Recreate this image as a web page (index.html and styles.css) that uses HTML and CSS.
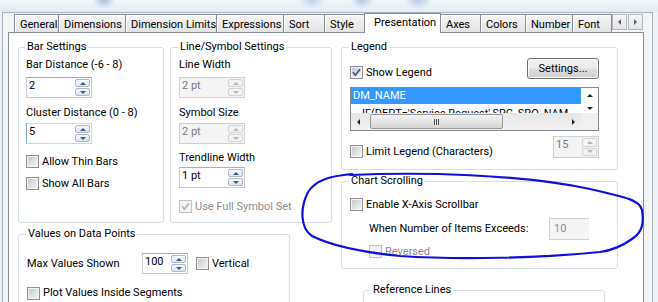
FILE: index.html
```html
<!DOCTYPE html>
<html lang="en">
<head>
    <meta charset="UTF-8">
    <meta name="viewport" content="width=device-width, initial-scale=1.0">
    <title>Chart Properties - Presentation</title>
    <link rel="stylesheet" href="styles.css">
</head>
<body>
    <div class="glass"></div>

    <div class="frame">
        <!-- Tab strip -->
        <div class="tabrow">
            <div class="tabs">
                <div class="tab">General</div>
                <div class="tab">Dimensions</div>
                <div class="tab">Dimension Limits</div>
                <div class="tab">Expressions</div>
                <div class="tab">Sort</div>
                <div class="tab">Style</div>
                <div class="tab active">Presentation</div>
                <div class="tab">Axes</div>
                <div class="tab">Colors</div>
                <div class="tab">Number</div>
                <div class="tab last">Font</div>
            </div>
            <div class="tab-scroll">
                <span class="tab-btn"><i class="tri-left"></i></span>
                <span class="tab-btn"><i class="tri-right"></i></span>
            </div>
        </div>

        <!-- Presentation page -->
        <div class="page">
            <div class="col">
                <div class="pair">
                    <fieldset class="group bar-settings">
                        <legend>Bar Settings</legend>
                        <div class="lbl">Bar Distance (-6 - 8)</div>
                        <div class="spin w66 first"><span class="val">2</span><span class="updown"><i class="up"></i><i class="down"></i></span></div>
                        <div class="lbl next">Cluster Distance (0 - 8)</div>
                        <div class="spin w66 second hot"><span class="val">5</span><span class="updown"><i class="up"></i><i class="down"></i></span></div>
                        <label class="check c1"><span class="cb"></span>Allow Thin Bars</label>
                        <label class="check c2"><span class="cb"></span>Show All Bars</label>
                    </fieldset>

                    <fieldset class="group line-settings">
                        <legend>Line/Symbol Settings</legend>
                        <div class="lbl">Line Width</div>
                        <div class="spin w66 first off"><span class="val">2 pt</span><span class="updown"><i class="up"></i><i class="down"></i></span></div>
                        <div class="lbl next">Symbol Size</div>
                        <div class="spin w66 second off"><span class="val">2 pt</span><span class="updown"><i class="up"></i><i class="down"></i></span></div>
                        <div class="lbl third">Trendline Width</div>
                        <div class="spin w66 fourth"><span class="val">1 pt</span><span class="updown"><i class="up"></i><i class="down"></i></span></div>
                        <label class="check c3 dis"><span class="cb"><svg class="tick" width="9" height="9" viewBox="0 0 9 9"><path d="M1 4.2 L3.4 7.2 L8 1.2" fill="none" stroke="#b4b4b4" stroke-width="1.7"/></svg></span>Use Full Symbol Set</label>
                    </fieldset>
                </div>

                <fieldset class="group values">
                    <legend>Values on Data Points</legend>
                    <div class="max-row">
                        <span class="max-lbl">Max Values Shown</span>
                        <div class="spin w46"><span class="val">100</span><span class="updown"><i class="up"></i><i class="down"></i></span></div>
                        <label class="check vert"><span class="cb"></span>Vertical</label>
                    </div>
                    <label class="check plot"><span class="cb"></span>Plot Values Inside Segments</label>
                </fieldset>
            </div>

            <div class="col">
                <fieldset class="group legend-box">
                    <legend>Legend</legend>
                    <div class="legend-top">
                        <label class="check show"><span class="cb"><svg class="tick" width="9" height="9" viewBox="0 0 9 9"><path d="M1 4.2 L3.4 7.2 L8 1.2" fill="none" stroke="#3c5088" stroke-width="1.7"/></svg></span>Show Legend</label>
                        <button class="btn">Settings...</button>
                    </div>
                    <div class="listbox">
                        <div class="list-rows">
                            <div class="row sel">DM_NAME</div>
                            <div class="row indent">IF(DEPT='Service Request',SRC_SRQ_NAM</div>
                        </div>
                        <div class="vscroll"><i class="tri-up"></i><i class="tri-down"></i></div>
                        <div class="hscroll">
                            <i class="tri-left dark"></i>
                            <span class="thumb"><span class="grip"></span></span>
                            <i class="tri-right dark"></i>
                        </div>
                        <div class="corner"></div>
                    </div>
                    <div class="limit-row">
                        <label class="check limit"><span class="cb"></span>Limit Legend (Characters)</label>
                        <div class="spin w46 tall off"><span class="val">15</span><span class="updown"><i class="up"></i><i class="down"></i></span></div>
                    </div>
                </fieldset>

                <fieldset class="group chart-scroll">
                    <legend>Chart Scrolling</legend>
                    <label class="check"><span class="cb"></span>Enable X-Axis Scrollbar</label>
                    <div class="exceed-row">
                        <span class="exceed-lbl">When Number of Items Exceeds:</span>
                        <span class="textbox off">10</span>
                    </div>
                    <label class="check rev dis"><span class="cb"></span>Reversed</label>
                </fieldset>

                <fieldset class="group ref-lines">
                    <legend>Reference Lines</legend>
                    <div class="ref-list"></div>
                </fieldset>
            </div>
        </div>
    </div>

    <!-- hand drawn marker around chart scrolling -->
    <svg class="scribble" width="658" height="302" viewBox="0 0 658 302">
        <path d="M350 175 C420 172 520 174 590 189 C625 197 640 200 642 210 C644 222 643 232 632 239 C625 244 615 250 600 252 C540 258 460 260 400 256 C360 252 330 245 312 236 C300 228 300 208 308 192 C316 180 330 176 352 174"
              fill="none" stroke="#1010dc" stroke-width="2.2" stroke-linecap="round"/>
    </svg>
</body>
</html>
```

FILE: styles.css
```css
* {
    box-sizing: border-box;
}
body {
    margin: 0;
    width: 658px;
    height: 302px;
    overflow: hidden;
    position: relative;
    background: #eef2f6;
    font-family: Roboto, "Liberation Sans", Arial, sans-serif;
    font-size: 11px;
    line-height: 14px;
    color: #000;
}
.glass {
    height: 12px;
    background:
        radial-gradient(ellipse 12px 9px at 104px 0, #a9c2dc, transparent),
        radial-gradient(ellipse 14px 9px at 312px 0, #bcd0e4, transparent),
        radial-gradient(ellipse 12px 9px at 362px 0, #b2c9e0, transparent),
        radial-gradient(ellipse 14px 9px at 418px 0, #b2c9e0, transparent),
        linear-gradient(#f3f7fb, #e2eaf3);
}
.frame {
    width: 651px;
    height: 290px;
    overflow: hidden;
    margin-left: 2px;
    border: 1px solid #a9b3be;
    border-bottom: 0;
    padding: 0 8px 0 5px;
    background: #f4f4f4;
}

/* tabs */
.tabrow {
    display: flex;
    align-items: flex-end;
    height: 19px;
    margin: 0 1px 0 6px;
}
.tabs {
    display: grid;
    grid-template-columns: 44px 67px 91px 67px 41px 41px 75px 40px 45px 47px 40px;
    align-items: end;
}
.tab {
    height: 18px;
    padding: 3px 0 0 5px;
    border: 1px solid #898c95;
    border-bottom: 0;
    border-right: 0;
    background: linear-gradient(#f6f6f6, #ececec 50%, #e3e3e3);
    box-shadow: inset 1px 1px 0 #fdfdfd;
    white-space: nowrap;
    overflow: hidden;
}
.tab.last {
    border-right: 1px solid #898c95;
}
.tab.active {
    position: relative;
    z-index: 1;
    height: 20px;
    margin: 0 -1px -1px;
    padding: 2px 0 0 9px;
    border-right: 1px solid #898c95;
    background: #fff;
    box-shadow: none;
}
.tab-scroll {
    align-self: flex-start;
    display: flex;
    gap: 1px;
    margin: 1px 0 0 auto;
}
.tab-btn {
    width: 15px;
    height: 16px;
    border: 1px solid #b4b8bf;
    background: linear-gradient(#f5f5f5, #e4e4e4);
    display: flex;
    align-items: center;
    justify-content: center;
}
.tri-left, .tri-right, .tri-up, .tri-down {
    display: block;
    width: 0;
    height: 0;
    border: 3px solid transparent;
}
.tri-left {
    border-left: 0;
    border-right: 3px solid #4d6185;
}
.tri-right {
    border-right: 0;
    border-left: 3px solid #4d6185;
}
.tri-left.dark {
    border-right-color: #222;
}
.tri-right.dark {
    border-left-color: #222;
}
.tri-up {
    border-top: 0;
    border-bottom: 3px solid #222;
}
.tri-down {
    border-bottom: 0;
    border-top: 3px solid #222;
}

/* page */
.page {
    height: 270px;
    border: 1px solid #898c95;
    border-bottom: 0;
    background: #fff;
    padding: 7px 0 0 9px;
    display: grid;
    grid-template-columns: 314px 277px;
    column-gap: 9px;
    align-items: start;
}
.group {
    margin: 0;
    min-width: 0;
    padding: 4px 8px 8px;
    border: 1px solid #d5dfe5;
    border-radius: 3px;
    display: flex;
    flex-direction: column;
    align-items: flex-start;
}
.group legend {
    padding: 0 2px;
    margin-left: -1px;
    line-height: 14px;
}
.pair {
    display: flex;
    gap: 6px;
}
.bar-settings {
    width: 146px;
    padding-left: 7px;
}
.line-settings {
    width: 162px;
}
.lbl {
    height: 14px;
    white-space: nowrap;
}
.lbl.next {
    margin-top: 8px;
}
.lbl.third {
    margin-top: 7px;
}

/* spin boxes */
.spin {
    display: flex;
    height: 21px;
    border: 1px solid #c6cad1;
    border-top-color: #abadb3;
    background: #fff;
}
.spin.first {
    margin-top: 5px;
}
.spin.second {
    margin-top: 3px;
}
.spin.fourth {
    margin-top: 2px;
}
.spin.hot {
    border-color: #c5daed #c5daed #c5daed #7fa8cf;
}
.spin.tall {
    height: 22px;
}
.w66 {
    width: 66px;
}
.w46 {
    width: 46px;
}
.val {
    flex: 1;
    padding: 1px 0 0 2px;
    white-space: nowrap;
}
.updown {
    width: 17px;
    padding: 1px;
    display: flex;
    flex-direction: column;
    gap: 1px;
}
.updown i {
    flex: 1;
    border: 1px solid #aeb8c5;
    border-radius: 2px;
    background: linear-gradient(#f6f8fb, #dde4ec);
    display: flex;
    align-items: center;
    justify-content: center;
}
.updown .up::after, .updown .down::after {
    content: "";
    border: 3px solid transparent;
}
.updown .up::after {
    border-top: 0;
    border-bottom: 3px solid #3e5a87;
}
.updown .down::after {
    border-bottom: 0;
    border-top: 3px solid #3e5a87;
}
.spin.off {
    background: #f4f4f4;
    border-color: #cfd1d4;
    color: #7a7a7a;
}
.spin.off .updown i {
    background: #f3f3f3;
    border-color: #d4d4d4;
}
.spin.off .up::after {
    border-bottom-color: #b6b6b6;
}
.spin.off .down::after {
    border-top-color: #b6b6b6;
}

/* checkboxes */
.check {
    display: flex;
    align-items: center;
    height: 15px;
    white-space: nowrap;
}
.cb {
    position: relative;
    flex: none;
    width: 13px;
    height: 13px;
    margin-right: 3px;
    border: 1px solid #8f8f8f;
    padding: 1px;
    background: #f4f4f4;
}
.cb::before {
    content: "";
    display: block;
    width: 9px;
    height: 9px;
    background: linear-gradient(135deg, #c6cacf, #f3f3f3);
}
.tick {
    position: absolute;
    left: 1px;
    top: 1px;
}
.check.dis {
    color: #8d8d8d;
}
.check.dis .cb {
    border-color: #c2c2c2;
}
.check.dis .cb::before {
    background: #f2f2f2;
}
.c1 {
    margin-top: 10px;
}
.c2 {
    margin-top: 7px;
}
.c3 {
    margin-top: 11px;
}

/* values on data points */
.values {
    width: 272px;
    margin-top: 4px;
    padding-top: 12px;
    height: 80px;
}
.max-row {
    display: flex;
    align-items: center;
}
.max-lbl {
    width: 115px;
}
.vert {
    margin-left: 8px;
}
.plot {
    margin-top: 12px;
}

/* legend */
.legend-box {
    padding: 4px 18px 10px 8px;
    align-items: stretch;
}
.legend-top {
    display: flex;
    align-items: flex-start;
}
.show {
    margin-top: 7px;
}
.btn {
    margin-left: auto;
    width: 72px;
    height: 21px;
    padding: 0;
    border: 1px solid #707070;
    border-radius: 3px;
    background: linear-gradient(#f2f2f2, #ebebeb 48%, #dddddd 52%, #cfcfcf);
    box-shadow: inset 0 0 0 1px #fbfbfb;
    font: inherit;
    color: #000;
}
.listbox {
    margin-top: 7px;
    height: 44px;
    border: 1px solid #828790;
    display: grid;
    grid-template-columns: 1fr 17px;
    grid-template-rows: 1fr 17px;
    overflow: hidden;
}
.list-rows {
    overflow: hidden;
    min-width: 0;
}
.row {
    height: 16px;
    padding-left: 2px;
    line-height: 16px;
    white-space: nowrap;
}
.row.sel {
    background: #3399ff;
    color: #fff;
}
.row.indent {
    padding: 2px 0 0 11px;
}
.vscroll {
    display: flex;
    flex-direction: column;
    align-items: center;
    justify-content: space-between;
    padding: 6px 0 3px;
    background: #fff;
}
.hscroll {
    display: flex;
    align-items: center;
    padding: 0 6px;
    background: linear-gradient(#e6e6e6, #f2f2f2);
}
.thumb {
    width: 133px;
    height: 15px;
    margin-left: 10px;
    border: 1px solid #999;
    border-radius: 2px;
    background: linear-gradient(#f4f4f4, #e4e4e4 50%, #d6d6d6);
    display: flex;
    align-items: center;
    justify-content: center;
}
.grip {
    width: 5px;
    height: 6px;
    background: repeating-linear-gradient(90deg, #505050 0 1px, #eee 1px 2px);
}
.hscroll .tri-right {
    margin-left: auto;
}
.corner {
    background: #f0f0f0;
}
.limit-row {
    display: flex;
    align-items: flex-start;
    margin-top: 5px;
}
.limit {
    margin-top: 8px;
}
.limit-row .spin {
    margin-left: auto;
}

/* chart scrolling */
.chart-scroll {
    margin-top: 4px;
    padding: 9px 18px 9px 8px;
    align-items: stretch;
}
.exceed-row {
    display: flex;
    align-items: center;
    margin: 6px 0 0 19px;
}
.exceed-lbl {
    width: 180px;
}
.textbox {
    width: 40px;
    height: 22px;
    padding: 3px 0 0 4px;
    border: 1px solid #cfd1d4;
    border-right: 0;
}
.textbox.off {
    background: #f4f4f4;
    color: #8d8d8d;
}
.rev {
    margin: 4px 0 0 19px;
}

/* reference lines */
.ref-lines {
    margin: 14px 13px 0 22px;
    padding: 6px 8px 0;
    height: 40px;
}
.ref-list {
    width: 160px;
    height: 20px;
    border: 1px solid #828790;
}

.scribble {
    position: absolute;
    top: 0;
    left: 0;
    pointer-events: none;
}
```
